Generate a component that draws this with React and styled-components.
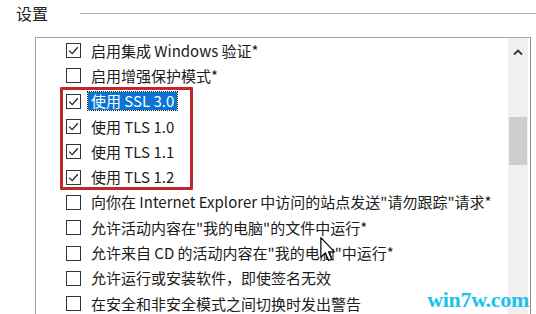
import React from "react";
import styled, { createGlobalStyle } from "styled-components";

const options = [
  { label: "启用集成 Windows 验证*", checked: true },
  { label: "启用增强保护模式*", checked: false },
];
const tls = [
  { label: "使用 SSL 3.0", checked: true, selected: true },
  { label: "使用 TLS 1.0", checked: true },
  { label: "使用 TLS 1.1", checked: true },
  { label: "使用 TLS 1.2", checked: true },
];
const more = [
  { label: '向你在 Internet Explorer 中访问的站点发送"请勿跟踪"请求*', checked: false },
  { label: '允许活动内容在"我的电脑"的文件中运行*', checked: false },
  { label: '允许来自 CD 的活动内容在"我的电脑"中运行*', checked: false },
  { label: "允许运行或安装软件，即使签名无效", checked: false },
  { label: "在安全和非安全模式之间切换时发出警告", checked: false },
];

const Option = ({ label, checked, selected }) => (
  <Row>
    <Box>
      {checked && (
        <svg width="13" height="13" viewBox="0 0 13 13">
          <path d="M2.2 6.6 L5.2 9.6 L10.8 3.2" fill="none" stroke="#222" strokeWidth="1.3" />
        </svg>
      )}
    </Box>
    <Label $selected={selected}>{label}</Label>
  </Row>
);

const App = () => {
  return (
    <Page>
      <GlobalStyle />
      <Header>
        <Title>设置</Title>
        <Rule />
      </Header>
      <Panel>
        <List>
          {options.map((o) => (
            <Option key={o.label} {...o} />
          ))}
          <Marked>
            {tls.map((o) => (
              <Option key={o.label} {...o} />
            ))}
          </Marked>
          {more.map((o) => (
            <Option key={o.label} {...o} />
          ))}
          <Cursor width="16" height="25" viewBox="0 0 13 21">
            <path
              d="M0.5 0.5 L0.5 17 L4.3 13.4 L7 19.8 L9.6 18.7 L7 12.5 L12 12.5 Z"
              fill="#fff"
              stroke="#000"
              strokeWidth="1"
              strokeLinejoin="round"
            />
          </Cursor>
        </List>
        <Scrollbar>
          <Arrow>
            <svg width="10" height="7" viewBox="0 0 10 7">
              <path d="M1 5.5 L5 1.5 L9 5.5" fill="none" stroke="#333" strokeWidth="1.8" />
            </svg>
          </Arrow>
          <Thumb />
        </Scrollbar>
      </Panel>
      <Watermark>win7w.com</Watermark>
    </Page>
  );
};

export default App;

const GlobalStyle = createGlobalStyle`
  body {
    margin: 0;
    background: #fff;
    font-family: "Noto Sans CJK SC", "Noto Sans", sans-serif;
    color: #1b1b1b;
  }
`;
const Page = styled.div`
  position: relative;
  width: 536px;
  height: 314px;
  overflow: hidden;
`;
const Header = styled.div`
  display: flex;
  align-items: center;
  height: 26px;
  padding-left: 16px;
`;
const Title = styled.div`
  font-size: 16px;
  line-height: 26px;
  width: 64px;
  color: #222;
`;
const Rule = styled.div`
  flex: 1;
  height: 1px;
  background: #adadad;
`;
const Panel = styled.div`
  display: flex;
  margin: 11px 0 0 35px;
  width: 494px;
  height: 290px;
  border: 1px solid #a6a6a6;
  border-bottom: 0;
  border-right-color: #8a8a8a;
`;
const List = styled.div`
  position: relative;
  flex: 1;
  padding: 0 0 0 30px;
`;
const Row = styled.div`
  display: flex;
  align-items: center;
  height: 25.3px;
  font-size: 15px;
  white-space: nowrap;
`;
const Box = styled.div`
  width: 13px;
  height: 13px;
  border: 1px solid #333;
  margin-right: 10px;
  display: flex;
  flex-shrink: 0;
`;
const Label = styled.span`
  line-height: 18px;
  padding: 0 3px;
  margin-left: -3px;
  background: ${(p) => (p.$selected ? "#0a74d0" : "transparent")};
  color: ${(p) => (p.$selected ? "#fff" : "inherit")};
  outline: ${(p) => (p.$selected ? "1px dotted #1b1b1b" : "none")};
`;
const Marked = styled.div`
  position: relative;
  &::after {
    content: "";
    position: absolute;
    left: -6px;
    top: -2px;
    width: 127px;
    height: 97px;
    border: 3px solid #c0282d;
    border-radius: 1px;
  }
`;
const Cursor = styled.svg`
  position: absolute;
  left: 284px;
  top: 199px;
`;
const Scrollbar = styled.div`
  width: 20px;
  margin-right: 2px;
  background: #f0f0f0;
  display: flex;
  flex-direction: column;
  align-items: center;
`;
const Arrow = styled.div`
  height: 28px;
  display: flex;
  align-items: center;
  justify-content: center;
`;
const Thumb = styled.div`
  margin-top: 51px;
  width: 18px;
  height: 48px;
  background: #cdcdcd;
`;
const Watermark = styled.div`
  position: absolute;
  right: 7px;
  bottom: 1px;
  font-family: "Liberation Serif", serif;
  font-weight: bold;
  font-size: 22px;
  color: #19c3ef;
  letter-spacing: -0.3px;
`;
